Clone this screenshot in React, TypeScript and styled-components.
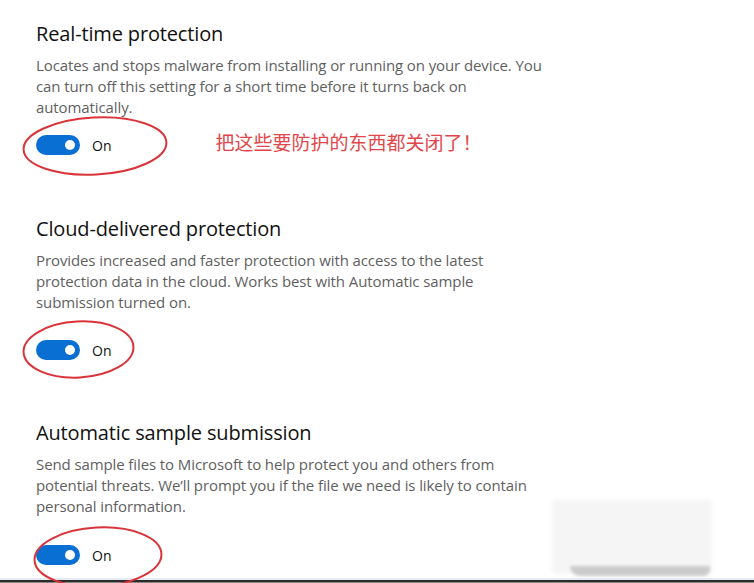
import React from "react";
import styled, { createGlobalStyle } from "styled-components";

const GlobalStyle = createGlobalStyle`
  html, body {
    margin: 0;
    padding: 0;
    background: #fff;
  }
  body {
    font-family: "Open Sans", "Noto Sans", "Liberation Sans", sans-serif;
  }
`;

const Page = styled.div`
  position: relative;
  display: flex;
  flex-direction: column;
  width: 754px;
  height: 583px;
  overflow: hidden;
  background: #fff;
`;

const Content = styled.main`
  display: flex;
  flex-direction: column;
  padding: 20px 0 0 36px;
`;

const Section = styled.section<{ $gapAfter: number }>`
  display: flex;
  flex-direction: column;
  margin-bottom: ${(p) => p.$gapAfter}px;
`;

const Title = styled.h2`
  margin: 0;
  font-size: 20px;
  font-weight: 400;
  line-height: 28px;
  color: #111;
  letter-spacing: -0.15px;
`;

const Desc = styled.p`
  margin: 7px 0 0;
  width: 514px;
  font-size: 15px;
  line-height: 21px;
  color: #5f5f5f;
  letter-spacing: -0.1px;
`;

const ToggleRow = styled.div<{ $gap: number }>`
  position: relative;
  display: flex;
  align-items: center;
  gap: 12px;
  height: 20px;
  margin-top: ${(p) => p.$gap}px;
`;

const Track = styled.div`
  display: flex;
  align-items: center;
  justify-content: flex-end;
  box-sizing: border-box;
  width: 44px;
  height: 20px;
  padding-right: 5px;
  border-radius: 10px;
  background: #0a6fd3;
  flex-shrink: 0;
`;

const Knob = styled.span`
  width: 10px;
  height: 10px;
  border-radius: 50%;
  background: #fff;
`;

const StateLabel = styled.span`
  font-size: 14px;
  color: #111;
`;

const Ring = styled.svg<{ $left: number; $top: number }>`
  position: absolute;
  left: ${(p) => p.$left}px;
  top: ${(p) => p.$top}px;
  overflow: visible;
  pointer-events: none;
`;

const Note = styled.span`
  margin: -6px 0 0 92px;
  font-family: "Noto Sans CJK SC", "Noto Sans", sans-serif;
  font-size: 19px;
  line-height: 28px;
  color: #e2464a;
  white-space: nowrap;
`;

const Smudge = styled.div`
  position: absolute;
  left: 552px;
  top: 500px;
  width: 160px;
  height: 74px;
  background: #f5f5f5;
  border-radius: 4px;
  filter: blur(2px);
`;

const Shade = styled.div`
  position: absolute;
  left: 570px;
  top: 566px;
  width: 140px;
  height: 10px;
  background: #cbcbcb;
  border-radius: 0 0 40px 60px;
  filter: blur(1.5px);
`;

const BottomEdge = styled.div`
  margin-top: auto;
  height: 5px;
  flex-shrink: 0;
  background: linear-gradient(#e4ebf2 0 2px, #2b2b2b 2px 4px, #888 4px);
`;

type RingSpec = { left: number; top: number; w: number; h: number };

const Toggle = ({
  gap,
  ring,
  note,
}: {
  gap: number;
  ring: RingSpec;
  note?: string;
}) => (
  <ToggleRow $gap={gap}>
    <Track>
      <Knob />
    </Track>
    <StateLabel>On</StateLabel>
    {note && <Note>{note}</Note>}
    <Ring
      $left={ring.left}
      $top={ring.top}
      width={ring.w}
      height={ring.h}
      viewBox={`0 0 ${ring.w} ${ring.h}`}
    >
      <ellipse
        cx={ring.w / 2}
        cy={ring.h / 2}
        rx={ring.w / 2 - 1.5}
        ry={ring.h / 2 - 1.5}
        fill="none"
        stroke="#d9343a"
        strokeWidth={2}
        transform={`rotate(-3 ${ring.w / 2} ${ring.h / 2})`}
      />
    </Ring>
  </ToggleRow>
);

const settings = [
  {
    title: "Real-time protection",
    desc: "Locates and stops malware from installing or running on your device. You can turn off this setting for a short time before it turns back on automatically.",
    gap: 17,
    after: 60,
    ring: { left: -14, top: -19, w: 146, h: 60 },
    note: "把这些要防护的东西都关闭了！",
  },
  {
    title: "Cloud-delivered protection",
    desc: "Provides increased and faster protection with access to the latest protection data in the cloud. Works best with Automatic sample submission turned on.",
    gap: 27,
    after: 59,
    ring: { left: -14, top: -20, w: 113, h: 59 },
  },
  {
    title: "Automatic sample submission",
    desc: "Send sample files to Microsoft to help protect you and others from potential threats. We’ll prompt you if the file we need is likely to contain personal information.",
    gap: 28,
    after: 0,
    ring: { left: -3, top: -19, w: 130, h: 62 },
  },
];

export default function App() {
  return (
    <>
      <GlobalStyle />
      <Page>
        <Smudge />
        <Shade />
        <Content>
          {settings.map((s) => (
            <Section key={s.title} $gapAfter={s.after}>
              <Title>{s.title}</Title>
              <Desc>{s.desc}</Desc>
              <Toggle gap={s.gap} ring={s.ring} note={s.note} />
            </Section>
          ))}
        </Content>
        <BottomEdge />
      </Page>
    </>
  );
}
